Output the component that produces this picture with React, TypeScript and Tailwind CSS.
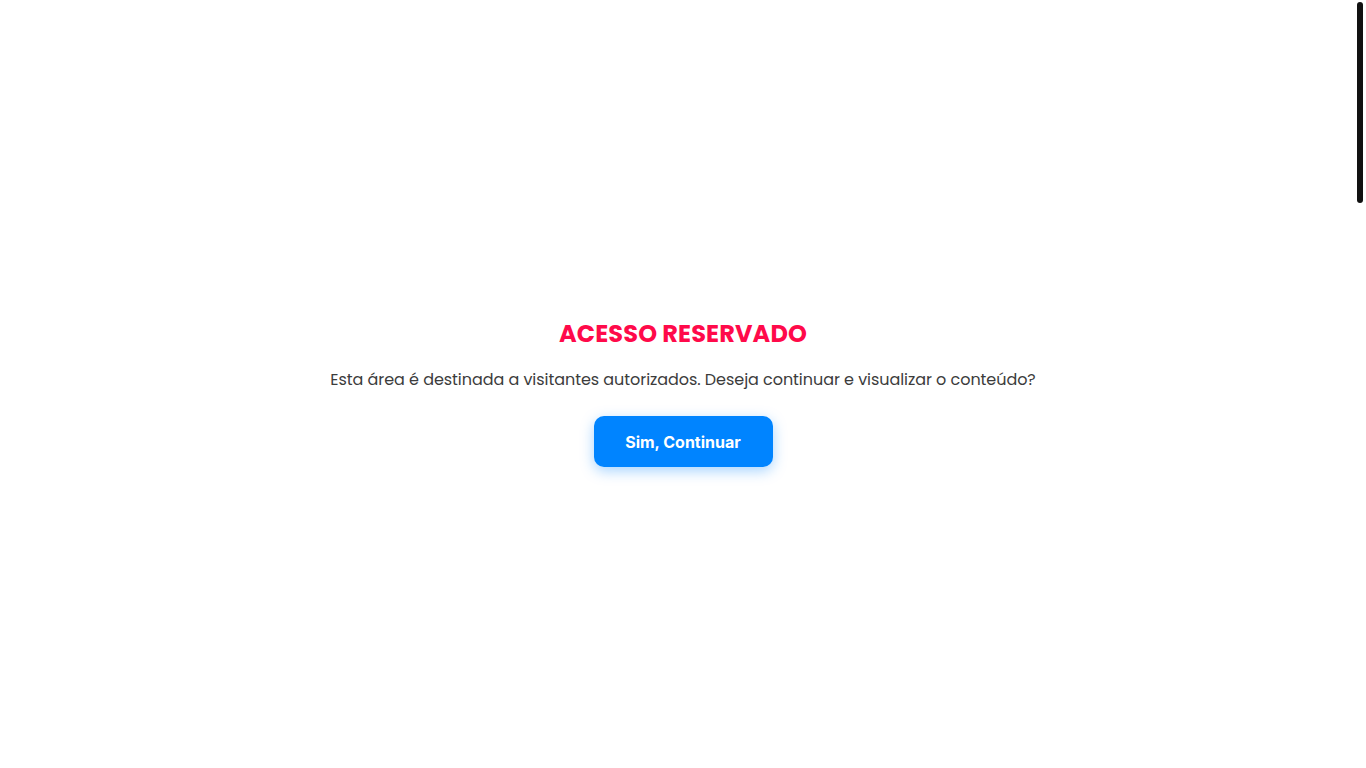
export default function App() {
  return (
    <div className="relative min-h-screen w-full bg-white">
      <main className="flex min-h-screen flex-col items-center justify-center px-4 pt-[15px] text-center">
        <h1 className="font-['Poppins','Open_Sans',sans-serif] text-[24px] font-bold leading-[36px] tracking-[0.12px] text-[#ff0a4a]">
          ACESSO RESERVADO
        </h1>
        <p className="mt-[16px] font-['Poppins','Open_Sans',sans-serif] text-[16px] leading-[24px] tracking-[-0.05px] text-[#3c3c3c]">
          Esta área é destinada a visitantes autorizados. Deseja continuar e visualizar o conteúdo?
        </p>
        <button
          type="button"
          className="mt-[24px] h-[51px] w-[179px] rounded-[10px] bg-[#0084ff] font-['Inter',sans-serif] text-[16px] font-bold text-white shadow-[0_4px_14px_rgba(0,132,255,0.35)]"
        >
          Sim, Continuar
        </button>
      </main>
      {/* decorative scrollbar thumb */}
      <div className="pointer-events-none fixed right-[3px] top-[2px] h-[201px] w-[6px] rounded-full bg-[#111111]" />
    </div>
  );
}
